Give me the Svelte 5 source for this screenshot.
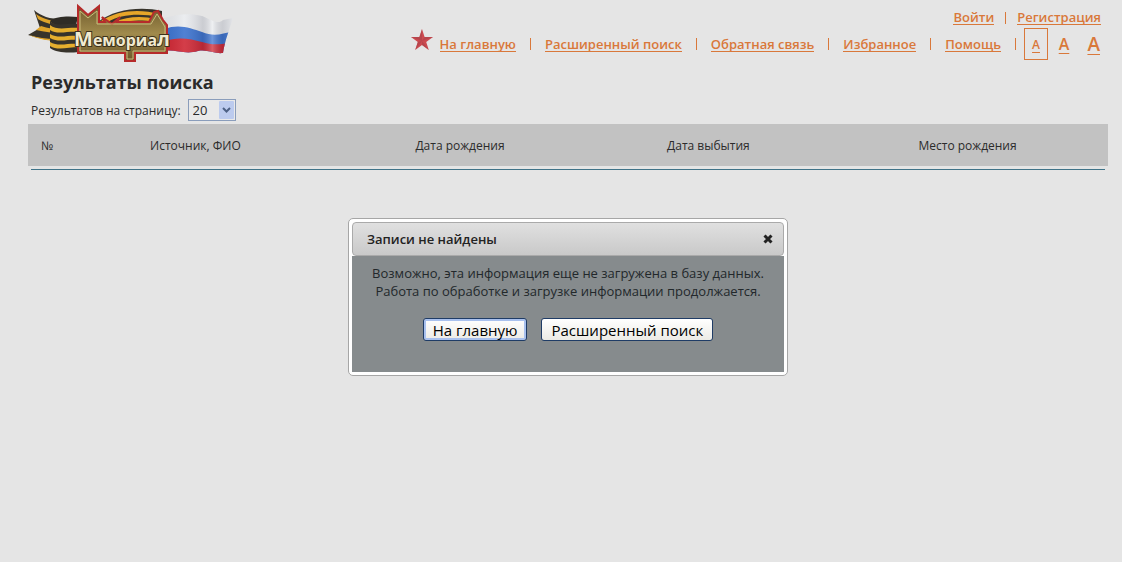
<script>
  const links = ['На главную', 'Расширенный поиск', 'Обратная связь', 'Избранное', 'Помощь'];
  const columns = ['№', 'Источник, ФИО', 'Дата рождения', 'Дата выбытия', 'Место рождения'];

  let perPage = $state('20');
  let fontSize = $state('small');
  let dialogOpen = $state(true);
</script>

<div class="page">
  <header>
    <a class="logo" href="#home" aria-label="Мемориал">
      <svg width="208" height="60" viewBox="0 0 208 60">
        <defs>
          <linearGradient id="gold" x1="0" y1="0" x2="0" y2="1">
            <stop offset="0" stop-color="#6e5a2c" />
            <stop offset="0.5" stop-color="#a08a4c" />
            <stop offset="1" stop-color="#6b572a" />
          </linearGradient>
          <linearGradient id="folds" x1="0" x2="1">
            <stop offset="0" stop-color="#000" stop-opacity="0.05" />
            <stop offset="0.3" stop-color="#fff" stop-opacity="0.1" />
            <stop offset="0.55" stop-color="#223" stop-opacity="0.15" />
            <stop offset="0.68" stop-color="#fff" stop-opacity="0.25" />
            <stop offset="0.82" stop-color="#223" stop-opacity="0.15" />
            <stop offset="1" stop-color="#fff" stop-opacity="0.2" />
          </linearGradient>
          <clipPath id="flag">
            <path d="M136 15C150 11 162 10 174 13C184 17 190 22 195 17L205 15C202 25 197 37 195 50C186 51 179 46 170 48C157 52 147 46 136 48Z" />
          </clipPath>
        </defs>

        <!-- St George ribbon -->
        <path d="M6 7C14 14 24 17 41 16L42 38C26 39 14 36 0 32L12 25Z" fill="#37332b" />
        <path d="M8 11C18 18 29 19 41 18V22C29 23 18 21 10 16ZM13 23C22 26 31 27 41 26V30C29 31 18 29 8 27ZM1 32C14 36 27 37 40 35V38C26 39 12 37 1 32Z" fill="#dfa42a" />
        <path d="M22 18C28 13 41 13 50 14L48 22C38 22 27 25 22 18Z" fill="#2f2c26" />
        <path d="M22 18C27 24 39 20 51 21V49C40 50 29 50 22 45Z" fill="#37332b" />
        <path d="M22 22C29 28 40 24 51 25V29C39 28 29 32 22 27ZM22 31C30 36 40 32 51 33V37C40 36 30 40 22 35ZM22 39C30 44 40 40 51 41V44C40 44 30 48 22 43Z" fill="#e5ae2e" />
        <path d="M70 19C86 6 113 3 134 8V22H70Z" fill="#37332b" />
        <path d="M73 18C90 7 112 6 131 11V14C113 10 92 11 80 19Z" fill="#e7a629" />
        <path d="M86 19C100 13 115 13 128 16V19C112 17 104 17 96 20Z" fill="#e7a629" />

        <!-- flag -->
        <g clip-path="url(#flag)">
          <path d="M134 8H208V54H134Z" fill="#e9ebee" />
          <path d="M134 27C150 20 162 25 174 29C186 34 194 31 206 28V54H134Z" fill="#3c73cf" />
          <path d="M134 39C150 33 162 36 174 39C186 43 194 41 206 39V54H134Z" fill="#cf2835" />
          <path d="M134 8H208V54H134Z" fill="url(#folds)" />
        </g>

        <!-- plate -->
        <path d="M50 3L60 12L71 3V19H77L74 14L84 21L92 14L89 19H121L126 9L130 8L135 17L139 22V50H107V58H97V50H50Z" fill="url(#gold)" stroke="#b62b2b" stroke-width="2" />
        <path d="M52 8L60 15L69 8V21H123L129 11L137 24V48H105V56H99V48H52Z" fill="none" stroke="#cbbb7c" />
        <text x="94" y="43" text-anchor="middle" class="logo-text"><tspan class="cap">М</tspan>емориа<tspan class="cap">л</tspan></text>
      </svg>
    </a>

    <div class="menus">
      <nav class="account">
        <a href="#login">Войти</a>
        <span class="sep"></span>
        <a href="#register">Регистрация</a>
      </nav>
      <nav class="main-nav">
        <svg class="star" width="22" height="22" viewBox="0 0 22 22">
          <path d="M11 0L13.600 8H22L15.200 13L17.800 21L11 16L4.200 21L6.800 13L0 8H8.400Z" fill="#cc4a50" />
          <path d="M11 0V12L8.400 8ZM22 8L11 12L13.600 8ZM17.800 21L11 12V16ZM4.200 21L11 12L6.800 13ZM0 8L11 12L8.400 8Z" fill="#a94349" opacity="0.6" />
        </svg>
        {#each links as link}
          <a href="#{link}">{link}</a>
          <span class="sep"></span>
        {/each}
        <div class="sizes">
          {#each ['small', 'medium', 'large'] as size}
            <button class={size} class:active={fontSize === size} onclick={() => (fontSize = size)}>A</button>
          {/each}
        </div>
      </nav>
    </div>
  </header>

  <main>
    <h1>Результаты поиска</h1>
    <div class="per-page">
      <label for="per-page">Результатов на страницу:</label>
      <div class="select">
        <select id="per-page" bind:value={perPage}>
          <option>20</option>
          <option>50</option>
          <option>100</option>
        </select>
        <svg width="15" height="18" viewBox="0 0 15 18">
          <rect width="15" height="18" rx="1" fill="#bccbee" />
          <path d="M4 7L7.500 10.500L11 7" fill="none" stroke="#4d6185" stroke-width="2" />
        </svg>
      </div>
    </div>

    <table>
      <thead>
        <tr>
          {#each columns as column}
            <th>{column}</th>
          {/each}
        </tr>
      </thead>
    </table>
    <hr />

    {#if dialogOpen}
      <div class="dialog" role="dialog" aria-labelledby="dialog-title">
        <div class="title-bar">
          <h2 id="dialog-title">Записи не найдены</h2>
          <button class="close" aria-label="Закрыть" onclick={() => (dialogOpen = false)}>
            <svg width="10" height="10" viewBox="0 0 10 10">
              <path d="M1.500 1.500L8.500 8.500M8.500 1.500L1.500 8.500" stroke="#222" stroke-width="3" />
            </svg>
          </button>
        </div>
        <div class="content">
          <p>Возможно, эта информация еще не загружена в базу данных. Работа по обработке и загрузке информации продолжается.</p>
          <div class="actions">
            <button class="primary">На главную</button>
            <button>Расширенный поиск</button>
          </div>
        </div>
      </div>
    {/if}
  </main>
</div>

<style>
  :global(body) {
    margin: 0;
    background: #e5e5e5;
  }

  .page {
    padding: 3px 14px 24px 28px;
    font-family: 'Open Sans', 'Noto Sans', sans-serif;
    font-size: 12px;
    color: #2b2b2b;
  }

  header {
    display: flex;
    justify-content: space-between;
    align-items: flex-start;
  }

  .logo svg {
    display: block;
  }

  .logo-text {
    font-family: 'Open Sans', sans-serif;
    font-size: 16px;
    font-weight: 700;
    fill: #f1ead0;
    stroke: #3d321c;
    stroke-width: 2px;
    paint-order: stroke;
  }

  .logo-text .cap {
    font-size: 20px;
  }

  .menus {
    display: flex;
    flex-direction: column;
    align-items: flex-end;
    padding-right: 7px;
  }

  .account,
  .main-nav {
    display: flex;
    align-items: center;
  }

  .account {
    height: 25px;
    gap: 11px;
    padding-top: 4px;
    box-sizing: border-box;
  }

  .main-nav {
    height: 32px;
    gap: 14px;
  }

  nav a {
    font-size: 13px;
    line-height: 14px;
    font-weight: 600;
    color: #d9783a;
    text-decoration: none;
    border-bottom: 1px solid #d9783a;
  }

  .sep {
    width: 1px;
    height: 12px;
    background: #d9783a;
  }

  .star {
    margin: 0 -7px 8px 0;
  }

  .sizes {
    display: flex;
    align-items: center;
    margin-left: -6px;
    gap: 5px;
  }

  .sizes button {
    padding: 0;
    border: 1px solid transparent;
    background: none;
    font-family: inherit;
    font-weight: 600;
    color: #d9783a;
    text-decoration: underline;
    text-underline-offset: 3px;
    cursor: pointer;
  }

  .sizes .active {
    border-color: #d9783a;
  }

  .sizes .small {
    width: 24px;
    height: 32px;
    font-size: 12px;
  }

  .sizes .medium {
    width: 22px;
    font-size: 16px;
  }

  .sizes .large {
    width: 21px;
    font-size: 19px;
    text-align: right;
  }

  h1 {
    margin: 7px 3px 5px;
    font-size: 18px;
    line-height: 24px;
    font-weight: 700;
  }

  .per-page {
    display: flex;
    align-items: center;
    gap: 7px;
    margin: 0 3px 3px;
  }

  .select {
    display: flex;
    align-items: center;
    width: 48px;
    height: 22px;
    box-sizing: border-box;
    border: 1px solid #8a9dbb;
    background: #e9e9e9;
  }

  .select select {
    flex: 1;
    min-width: 0;
    padding: 0 0 0 4px;
    border: 0;
    background: none;
    appearance: none;
    font-family: inherit;
    font-size: 13px;
    color: #2b2b2b;
  }

  .select svg {
    margin-right: 1px;
    pointer-events: none;
  }

  table {
    width: 100%;
    border-collapse: collapse;
    table-layout: fixed;
    background: #c2c2c2;
  }

  th {
    height: 42px;
    padding: 0;
    font-weight: 400;
    text-align: center;
  }

  th:nth-child(1) {
    width: 3%;
    padding-left: 6px;
    box-sizing: border-box;
  }

  th:nth-child(2) {
    width: 25%;
  }

  th:nth-child(3) {
    width: 24%;
  }

  th:nth-child(4) {
    width: 22%;
  }

  hr {
    height: 1px;
    margin: 3px 3px 0;
    border: 0;
    background: #3f7388;
  }

  .dialog {
    max-width: 432px;
    margin: 48px auto 0;
    padding: 3px;
    border: 1px solid #a6a6a6;
    border-radius: 5px;
    background: #fff;
  }

  .title-bar {
    display: flex;
    align-items: center;
    justify-content: space-between;
    height: 34px;
    padding: 0 10px 0 14px;
    box-sizing: border-box;
    border: 1px solid #aaa;
    border-radius: 4px;
    background: linear-gradient(#e0e0e0, #c9c9c9);
  }

  h2 {
    margin: 0;
    font-size: 13px;
    font-weight: 600;
    color: #222;
  }

  .close {
    display: flex;
    padding: 0;
    border: 0;
    background: none;
    cursor: pointer;
  }

  .content {
    padding: 8px 12px 31px;
    background: #868b8d;
    text-align: center;
  }

  p {
    margin: 0;
    font-size: 13px;
    line-height: 18px;
    color: #22282b;
  }

  .actions {
    display: flex;
    justify-content: center;
    gap: 14px;
    margin-top: 18px;
  }

  .actions button {
    height: 23px;
    padding: 0 9px;
    border: 1px solid #1f3c66;
    border-radius: 3px;
    background: linear-gradient(#fff, #ecebe5);
    font-family: inherit;
    font-size: 15px;
    line-height: 20px;
    color: #000;
  }

  .actions .primary {
    box-shadow: inset 0 0 0 2px #a9c1ee;
  }
</style>
